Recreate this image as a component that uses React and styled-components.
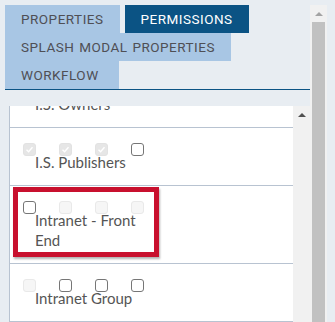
import React, { useLayoutEffect, useRef } from "react";
import styled, { createGlobalStyle } from "styled-components";

const GlobalStyle = createGlobalStyle`
  html, body {
    margin: 0;
    padding: 0;
    background: #e8edf2;
  }
  * {
    box-sizing: border-box;
  }
`;

const rows = [
  { label: "I.S. Owners", boxes: ["dc", "dc", "dc", "on"] },
  { label: "I.S. Publishers", boxes: ["dc", "dc", "dc", "on"] },
  { label: "Intranet - Front End", boxes: ["on", "off", "off", "off"], marked: true },
  { label: "Intranet Group", boxes: ["off", "on", "on", "on"] },
  { label: "Intranet Users", boxes: ["off", "on", "on", "on"] },
];

const tabs = [
  { name: "PROPERTIES" },
  { name: "PERMISSIONS", active: true },
  { name: "SPLASH MODAL PROPERTIES" },
  { name: "WORKFLOW", wide: true },
];

function App() {
  const listRef = useRef(null);

  // the list is shown scrolled a little, "I.S. Owners" is cut at the top
  useLayoutEffect(() => {
    if (listRef.current) listRef.current.scrollTop = 36;
  }, []);

  return (
    <>
      <GlobalStyle />
      <Page>
        <Main>
          <TabBar>
            {tabs.map((t) => (
              <Tab key={t.name} $active={t.active} $wide={t.wide}>
                {t.name}
              </Tab>
            ))}
          </TabBar>

          <Panel>
            <List ref={listRef}>
              {rows.map((r) => (
                <Row key={r.label}>
                  <Checks>
                    {r.boxes.map((b, i) => (
                      <Box key={i} $kind={b}>
                        {b === "dc" && (
                          <svg width="9" height="9" viewBox="0 0 9 9">
                            <polyline
                              points="1.5,4.8 3.6,6.8 7.5,2.2"
                              fill="none"
                              stroke="#ffffff"
                              strokeWidth="1.4"
                            />
                          </svg>
                        )}
                      </Box>
                    ))}
                  </Checks>
                  <Label>{r.label}</Label>
                  {r.marked && <Highlight />}
                </Row>
              ))}
            </List>
            <ScrollTrack>
              <ArrowBtn $color="#505050" />
            </ScrollTrack>
          </Panel>
        </Main>

        <ScrollTrack>
          <ArrowBtn $color="#a3a3a3" />
          <Thumb />
        </ScrollTrack>
      </Page>
    </>
  );
}

const Page = styled.div`
  display: flex;
  height: 322px;
  padding: 5px 8px 0 5px;
  overflow: hidden;
`;

const Main = styled.div`
  flex: 1;
  display: flex;
  flex-direction: column;
  min-width: 0;
`;

const TabBar = styled.div`
  display: flex;
  flex-wrap: wrap;
  column-gap: 5px;
  border-bottom: 1px solid #0b5384;
`;

const Tab = styled.div`
  height: 28px;
  padding: 0 ${(p) => (p.$wide ? "20px" : "16px")} 0 16px;
  display: flex;
  align-items: center;
  font-family: Roboto, "Liberation Sans", sans-serif;
  font-size: 13.5px;
  letter-spacing: 0.5px;
  word-spacing: 1px;
  color: ${(p) => (p.$active ? "#ffffff" : "#4f4f55")};
  background: ${(p) => (p.$active ? "#0b5384" : "#a8c6e4")};
  white-space: nowrap;
`;

const Panel = styled.div`
  flex: 1;
  min-height: 0;
  display: flex;
  margin: 16px 0 0 4px;
`;

const List = styled.div`
  flex: 1;
  overflow: hidden;
  background: #ffffff;
  border-left: 1px solid #b8c3d1;
`;

const Row = styled.div`
  position: relative;
  padding: 15px 0 13px 13px;
  border-bottom: 1px solid #b8c3d1;
`;

const Checks = styled.div`
  display: flex;
  gap: 23px;
  height: 13px;
`;

const Box = styled.span`
  width: 13px;
  height: 13px;
  border-radius: 3px;
  display: flex;
  align-items: center;
  justify-content: center;
  border: 1px solid
    ${(p) => (p.$kind === "on" ? "#767676" : p.$kind === "dc" ? "#e2e2e2" : "#e9e9e9")};
  background: ${(p) => (p.$kind === "on" ? "#ffffff" : p.$kind === "dc" ? "#e6e6e6" : "#f6f6f6")};
`;

const Label = styled.div`
  margin: -4px 0 0 12px;
  max-width: 112px;
  font-family: Lato, "Open Sans", sans-serif;
  font-size: 15px;
  line-height: 20px;
  color: #555555;
`;

const Highlight = styled.div`
  position: absolute;
  top: 1px;
  left: 3px;
  width: 146px;
  height: 70px;
  border: 5px solid #c8102e;
  box-shadow: 1px 2px 2px rgba(0, 0, 0, 0.3);
  pointer-events: none;
`;

const ScrollTrack = styled.div`
  width: 17px;
  flex-shrink: 0;
  display: flex;
  flex-direction: column;
  background: #f1f1f1;
`;

const ArrowBtn = styled.div`
  height: 17px;
  display: flex;
  align-items: center;
  justify-content: center;

  &::before {
    content: "";
    border-left: 4px solid transparent;
    border-right: 4px solid transparent;
    border-bottom: 4px solid ${(p) => p.$color};
  }
`;

const Thumb = styled.div`
  flex: 1;
  margin: 0 2px;
  background: #c1c1c1;
`;

export default App;
